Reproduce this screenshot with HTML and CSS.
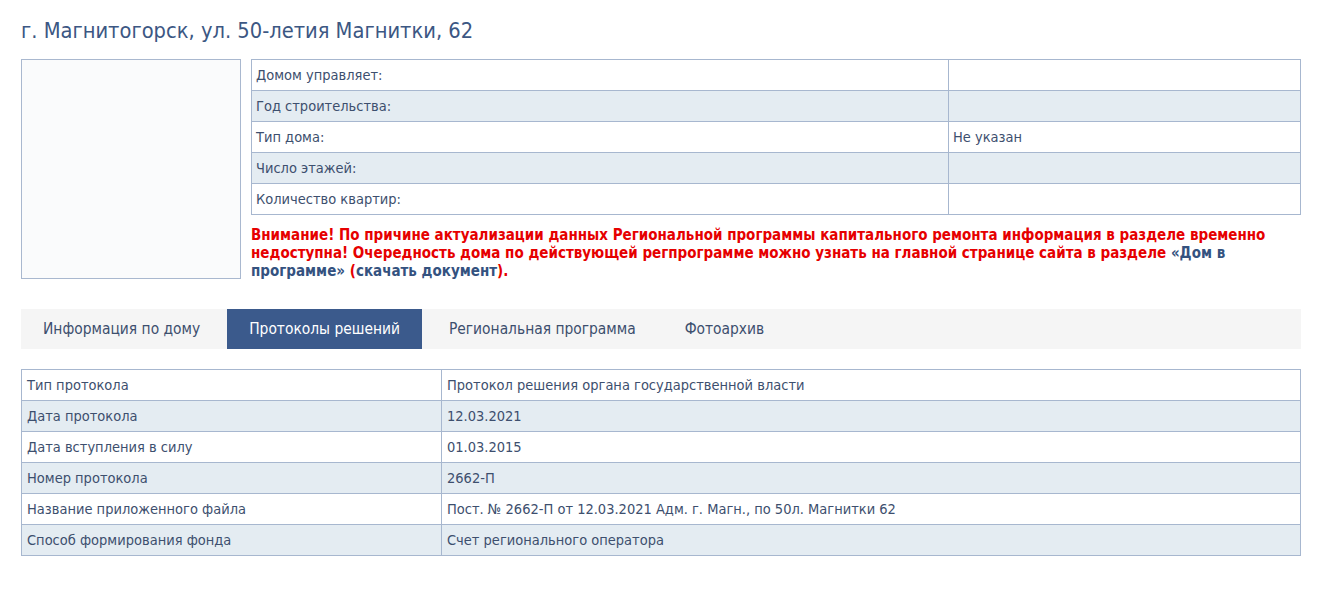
FILE: index.html
```html
<!DOCTYPE html>
<html lang="ru">
<head>
    <meta charset="UTF-8">
    <title>г. Магнитогорск, ул. 50-летия Магнитки, 62</title>
    <link rel="stylesheet" href="styles.css">
</head>
<body>
<div class="house-page">
    <h1 class="house-title">г. Магнитогорск, ул. 50-летия Магнитки, 62</h1>

    <div class="house-top">
        <div class="house-photo"></div>
        <div class="house-info">
            <table class="data-table info-table">
                <tr><td>Домом управляет:</td><td></td></tr>
                <tr><td>Год строительства:</td><td></td></tr>
                <tr><td>Тип дома:</td><td>Не указан</td></tr>
                <tr><td>Число этажей:</td><td></td></tr>
                <tr><td>Количество квартир:</td><td></td></tr>
            </table>
            <p class="house-warning">
                Внимание! По причине актуализации данных Региональной программы капитального ремонта информация в разделе временно недоступна! Очередность дома по действующей регпрограмме можно узнать на главной странице сайта в разделе <a href="#">«Дом в программе»</a> (<a href="#">скачать документ</a>).
            </p>
        </div>
    </div>

    <ul class="house-tabs">
        <li class="house-tab">Информация по дому</li>
        <li class="house-tab active">Протоколы решений</li>
        <li class="house-tab">Региональная программа</li>
        <li class="house-tab">Фотоархив</li>
    </ul>

    <table class="data-table protocol-table">
        <tr><td>Тип протокола</td><td>Протокол решения органа государственной власти</td></tr>
        <tr><td>Дата протокола</td><td>12.03.2021</td></tr>
        <tr><td>Дата вступления в силу</td><td>01.03.2015</td></tr>
        <tr><td>Номер протокола</td><td>2662-П</td></tr>
        <tr><td>Название приложенного файла</td><td>Пост. № 2662-П от 12.03.2021 Адм. г. Магн., по 50л. Магнитки 62</td></tr>
        <tr><td>Способ формирования фонда</td><td>Счет регионального оператора</td></tr>
    </table>
</div>
</body>
</html>
```

FILE: styles.css
```css
* {
    margin: 0;
    padding: 0;
    box-sizing: border-box;
}
body {
    background: #fff;
    font-family: "DejaVu Sans Condensed", "DejaVu Sans", sans-serif;
    font-size: 14.5px;
    color: #3d4f6e;
}
.house-page {
    width: 1280px;
    margin-left: 21px;
    padding-top: 16px;
}
.house-title {
    font-size: 21.7px;
    font-weight: normal;
    line-height: 30px;
    color: #3c5783;
    margin-bottom: 13px;
}
.house-top {
    display: flex;
    gap: 10px;
}
.house-photo {
    width: 220px;
    height: 220px;
    flex: none;
    border: 1px solid #a9b8cf;
    background: #fafbfc;
}
.house-info {
    flex: 1;
}
.data-table {
    width: 100%;
    border-collapse: collapse;
}
.data-table td {
    height: 31px;
    border: 1px solid #a7b7cf;
    padding: 0 4px;
    vertical-align: middle;
    white-space: nowrap;
}
.data-table tr:nth-child(even) td {
    background: #e4ecf2;
}
.info-table td:first-child {
    width: 697px;
}
.house-warning {
    margin-top: 11px;
    font-size: 15px;
    font-weight: bold;
    line-height: 18px;
    color: #e60000;
}
.house-warning a {
    color: #34527f;
    text-decoration: none;
}
.house-tabs {
    list-style: none;
    display: flex;
    gap: 5px;
    margin-top: 29px;
    height: 40px;
    background: #f5f5f5;
}
.house-tab {
    padding: 0 22px;
    line-height: 40px;
    font-family: "Liberation Sans Narrow", "DejaVu Sans Condensed", sans-serif;
    font-size: 15.4px;
    color: #3d4f6e;
}
.house-tab.active {
    background: #3b5a8c;
    color: #fff;
}
.protocol-table {
    margin-top: 20px;
}
.protocol-table td:first-child {
    width: 420px;
}
.protocol-table td {
    padding: 0 5px;
}
```
